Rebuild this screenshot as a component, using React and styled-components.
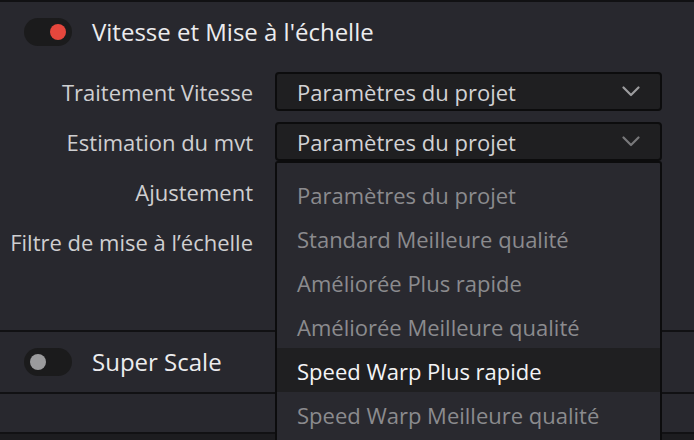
import React from 'react';
import styled, { createGlobalStyle } from 'styled-components';

const GlobalStyle = createGlobalStyle`
  html, body {
    margin: 0;
    padding: 0;
    background: #1c1c1f;
    font-family: "Open Sans", "Noto Sans", sans-serif;
    overflow: hidden;
  }
`;

const options = [
  "Paramètres du projet",
  "Standard Meilleure qualité",
  "Améliorée Plus rapide",
  "Améliorée Meilleure qualité",
  "Speed Warp Plus rapide",
  "Speed Warp Meilleure qualité",
];

const Page = styled.div`
  width: 694px;
  height: 440px;
  border-top: 2px solid #111113;
  box-sizing: border-box;
  display: flex;
  flex-direction: column;
  background: #1c1c1f;
`;

const Section = styled.div`
  background: #28282e;
  border-bottom: 2px solid #111113;
  padding: ${(p) => p.$pad || '0'};
  height: ${(p) => p.$height || 'auto'};
  box-sizing: border-box;
  display: flex;
  flex-direction: column;
  justify-content: ${(p) => (p.$center ? 'center' : 'flex-start')};
`;

const Header = styled.div`
  display: flex;
  align-items: center;
  gap: 20px;
  padding-left: 24px;
  height: 28px;
`;

const Toggle = styled.div`
  width: 48px;
  height: 28px;
  border-radius: 14px;
  background: #1b1b1c;
  display: flex;
  align-items: center;
  justify-content: ${(p) => (p.$on ? 'flex-end' : 'flex-start')};
  padding: 0 6px;
  box-sizing: border-box;
`;

const Knob = styled.div`
  width: 16px;
  height: 16px;
  border-radius: 50%;
  background: ${(p) => (p.$on ? '#e5473d' : '#9b9b9d')};
`;

const Title = styled.div`
  color: #ececee;
  font-size: 24px;
  line-height: 28px;
`;

const Form = styled.div`
  display: grid;
  grid-template-columns: 253px 387px;
  column-gap: 22px;
  row-gap: 11px;
  margin-top: 26px;
`;

const Label = styled.div`
  height: 39px;
  display: flex;
  align-items: center;
  justify-content: flex-end;
  padding-top: 1px;
  box-sizing: border-box;
  color: #cfcfd1;
  font-size: 22px;
  white-space: nowrap;
`;

const Field = styled.div`
  position: relative;
  height: 39px;
`;

const Select = styled.div`
  height: 39px;
  box-sizing: border-box;
  background: #1f1f21;
  border: 2px solid #0c0c0d;
  border-radius: 4px;
  display: flex;
  align-items: center;
  justify-content: space-between;
  padding: 0 20px 0 20px;
  color: #d2d2d4;
  font-size: 22px;
`;

const Menu = styled.div`
  position: absolute;
  top: 39px;
  left: 0;
  width: 387px;
  height: 300px;
  box-sizing: border-box;
  background: #29292f;
  border: 2px solid #0c0c0d;
  border-bottom: none;
  border-radius: 3px 3px 0 0;
  padding-top: 9px;
  z-index: 10;
`;

const Item = styled.div`
  height: 44px;
  display: flex;
  align-items: center;
  padding: 1px 0 0 20px;
  box-sizing: border-box;
  font-size: 22px;
  color: ${(p) => (p.$active ? '#f4f4f6' : '#8b8b8e')};
  background: ${(p) => (p.$active ? '#1f1f21' : 'transparent')};
`;

const Chevron = ({ color }) => (
  <svg width="18" height="11" viewBox="0 0 18 11" fill="none">
    <polyline points="1.5,1.5 9,9 16.5,1.5" stroke={color} strokeWidth="2.2" strokeLinecap="round" strokeLinejoin="round" />
  </svg>
);

export default function App() {
  return (
    <>
      <GlobalStyle />
      <Page>
        <Section $pad="16px 0 69px 0">
          <Header>
            <Toggle $on>
              <Knob $on />
            </Toggle>
            <Title>Vitesse et Mise à l'échelle</Title>
          </Header>
          <Form>
            <Label>Traitement Vitesse</Label>
            <Field>
              <Select>
                Paramètres du projet
                <Chevron color="#9c9c9e" />
              </Select>
            </Field>
            <Label>Estimation du mvt</Label>
            <Field>
              <Select>
                Paramètres du projet
                <Chevron color="#78787a" />
              </Select>
              <Menu>
                {options.map((o, i) => (
                  <Item key={o} $active={i === 4}>{o}</Item>
                ))}
              </Menu>
            </Field>
            <Label>Ajustement</Label>
            <Field />
            <Label>Filtre de mise à l’échelle</Label>
            <Field />
          </Form>
        </Section>
        <Section $height="62px" $center>
          <Header>
            <Toggle>
              <Knob />
            </Toggle>
            <Title>Super Scale</Title>
          </Header>
        </Section>
        <Section $height="40px" />
      </Page>
    </>
  );
}
